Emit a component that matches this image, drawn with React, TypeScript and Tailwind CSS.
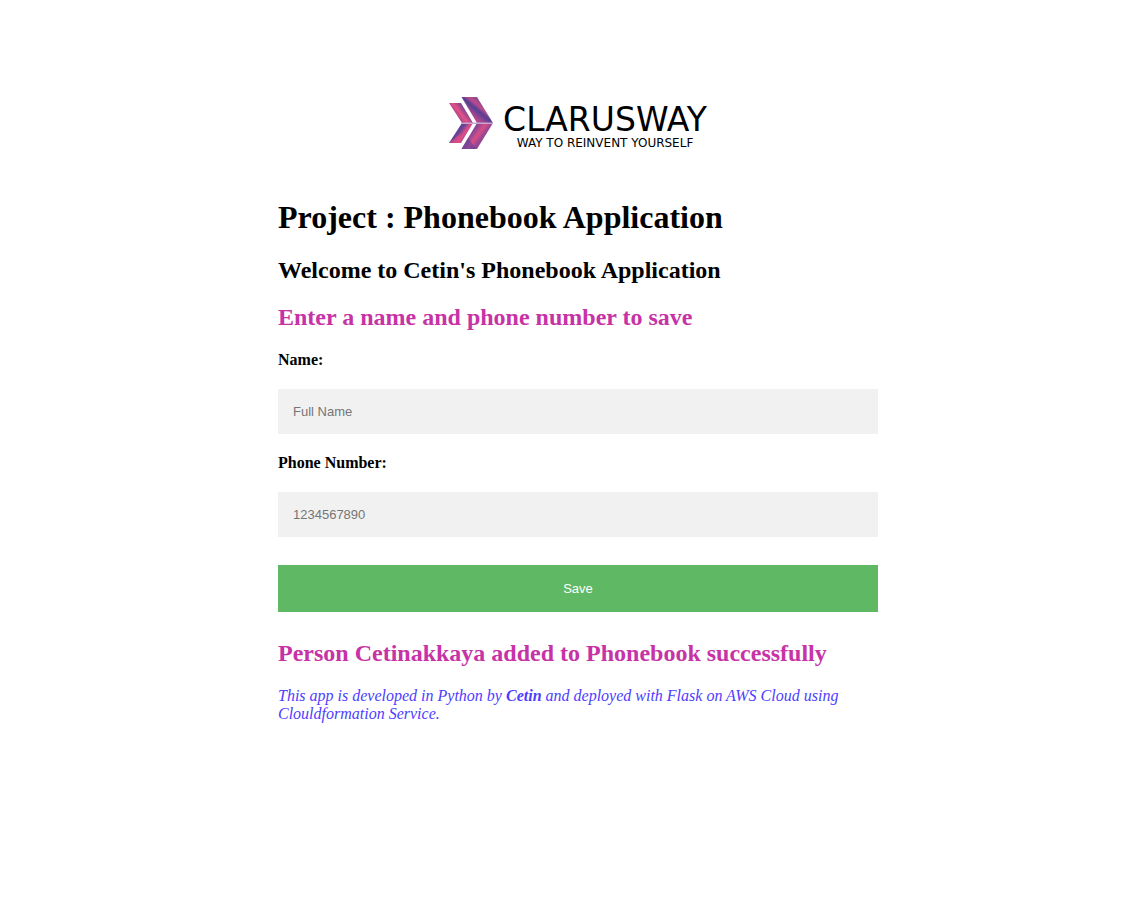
import type { InputHTMLAttributes, ReactNode } from "react";

function LogoMark() {
  return (
    <svg viewBox="0 0 44 52" className="h-13 w-11 shrink-0" aria-hidden="true">
      <defs>
        <linearGradient id="frontUpper" gradientUnits="userSpaceOnUse" x1="21" y1="22" x2="36" y2="4">
          <stop offset="0" stopColor="#c94a8a" />
          <stop offset="0.25" stopColor="#a0468f" />
          <stop offset="0.5" stopColor="#543f94" />
          <stop offset="0.66" stopColor="#b84b8c" />
          <stop offset="0.8" stopColor="#a0488f" />
          <stop offset="1" stopColor="#6d4294" />
        </linearGradient>
        <linearGradient id="frontLower" gradientUnits="userSpaceOnUse" x1="19" y1="31" x2="38" y2="45">
          <stop offset="0" stopColor="#5a4196" />
          <stop offset="0.28" stopColor="#8f4793" />
          <stop offset="0.5" stopColor="#d94e87" />
          <stop offset="0.7" stopColor="#9a4791" />
          <stop offset="1" stopColor="#7a4594" />
        </linearGradient>
        <linearGradient id="backUpper" gradientUnits="userSpaceOnUse" x1="6" y1="21" x2="19" y2="11">
          <stop offset="0" stopColor="#8a4594" />
          <stop offset="0.45" stopColor="#e64f85" />
          <stop offset="0.6" stopColor="#b44a8d" />
          <stop offset="1" stopColor="#4f3f95" />
        </linearGradient>
        <linearGradient id="backLower" gradientUnits="userSpaceOnUse" x1="6" y1="32" x2="18" y2="41">
          <stop offset="0" stopColor="#4f3f95" />
          <stop offset="0.35" stopColor="#6b4396" />
          <stop offset="0.65" stopColor="#e04e86" />
          <stop offset="1" stopColor="#9b4791" />
        </linearGradient>
      </defs>
      <path d="M0 6H12L24 26H13Z" fill="url(#backUpper)" />
      <path d="M13 26H24L12 46H0Z" fill="url(#backLower)" />
      <path d="M0 46L11 37L12 46Z" fill="#de4d86" opacity="0.7" />
      <path d="M12.5 0H28L44 26H28Z" fill="url(#frontUpper)" />
      <path d="M28 26H44L28 52H12.5Z" fill="url(#frontLower)" />
      <path d="M12.5 52L19 41L27 52Z" fill="#54409a" opacity="0.55" />
      <path d="M12 25.500H44V27H12Z" fill="#c9a6cf" />
    </svg>
  );
}

function Logo() {
  return (
    <div className="flex items-start justify-center">
      <LogoMark />
      <div className="ml-[10px] flex flex-col items-center whitespace-nowrap font-['DejaVu_Sans',sans-serif] text-black">
        <span className="pt-[7px] text-[33px] leading-8">CLARUSWAY</span>
        <span className="text-[12px] leading-[14px]">WAY TO REINVENT YOURSELF</span>
      </div>
    </div>
  );
}

function Notice({ children }: { children: ReactNode }) {
  return <h2 className="text-2xl leading-[27px] font-bold text-[#c733a6]">{children}</h2>;
}

type FieldProps = InputHTMLAttributes<HTMLInputElement> & { id: string; label: string };

function Field({ id, label, ...input }: FieldProps) {
  return (
    <div className="flex flex-col gap-5">
      <label htmlFor={id} className="text-base leading-[18px] font-bold">
        {label}
      </label>
      <input
        id={id}
        name={id}
        className="w-full bg-[#f1f1f1] p-[15px] font-['Liberation_Sans',Arial,sans-serif] text-[13px] leading-[15px] placeholder:text-[#757575] focus:bg-[#ddd] focus:outline-none"
        {...input}
      />
    </div>
  );
}

export default function App() {
  return (
    <main className="bg-white pt-[97px] pr-4 pb-16 pl-7 font-['Liberation_Serif','Times_New_Roman',serif] text-black">
      <div className="mx-auto max-w-[600px]">
        <Logo />
        <h1 className="mt-[49px] text-[32px] leading-9 font-bold">Project : Phonebook Application</h1>
        <h2 className="mt-[22px] text-2xl leading-[27px] font-bold">Welcome to Cetin's Phonebook Application</h2>
        <form className="mt-5 flex flex-col gap-5" onSubmit={(event) => event.preventDefault()}>
          <Notice>Enter a name and phone number to save</Notice>
          <Field id="username" label="Name:" type="text" placeholder="Full Name" />
          <Field id="phonenumber" label="Phone Number:" type="tel" placeholder="1234567890" />
          <button
            type="submit"
            className="mt-2 w-full cursor-pointer bg-[#5fb864] px-5 py-4 font-['Liberation_Sans',Arial,sans-serif] text-[13px] leading-[15px] text-white hover:bg-[#4caf50]"
          >
            Save
          </button>
        </form>
        <div className="mt-7 flex flex-col gap-5">
          <Notice>Person Cetinakkaya added to Phonebook successfully</Notice>
          <p className="text-base leading-[18px] text-[#4d3dff] italic">
            This app is developed in Python by <b>Cetin</b> and deployed with Flask on AWS Cloud using Clouldformation
            Service.
          </p>
        </div>
      </div>
    </main>
  );
}
